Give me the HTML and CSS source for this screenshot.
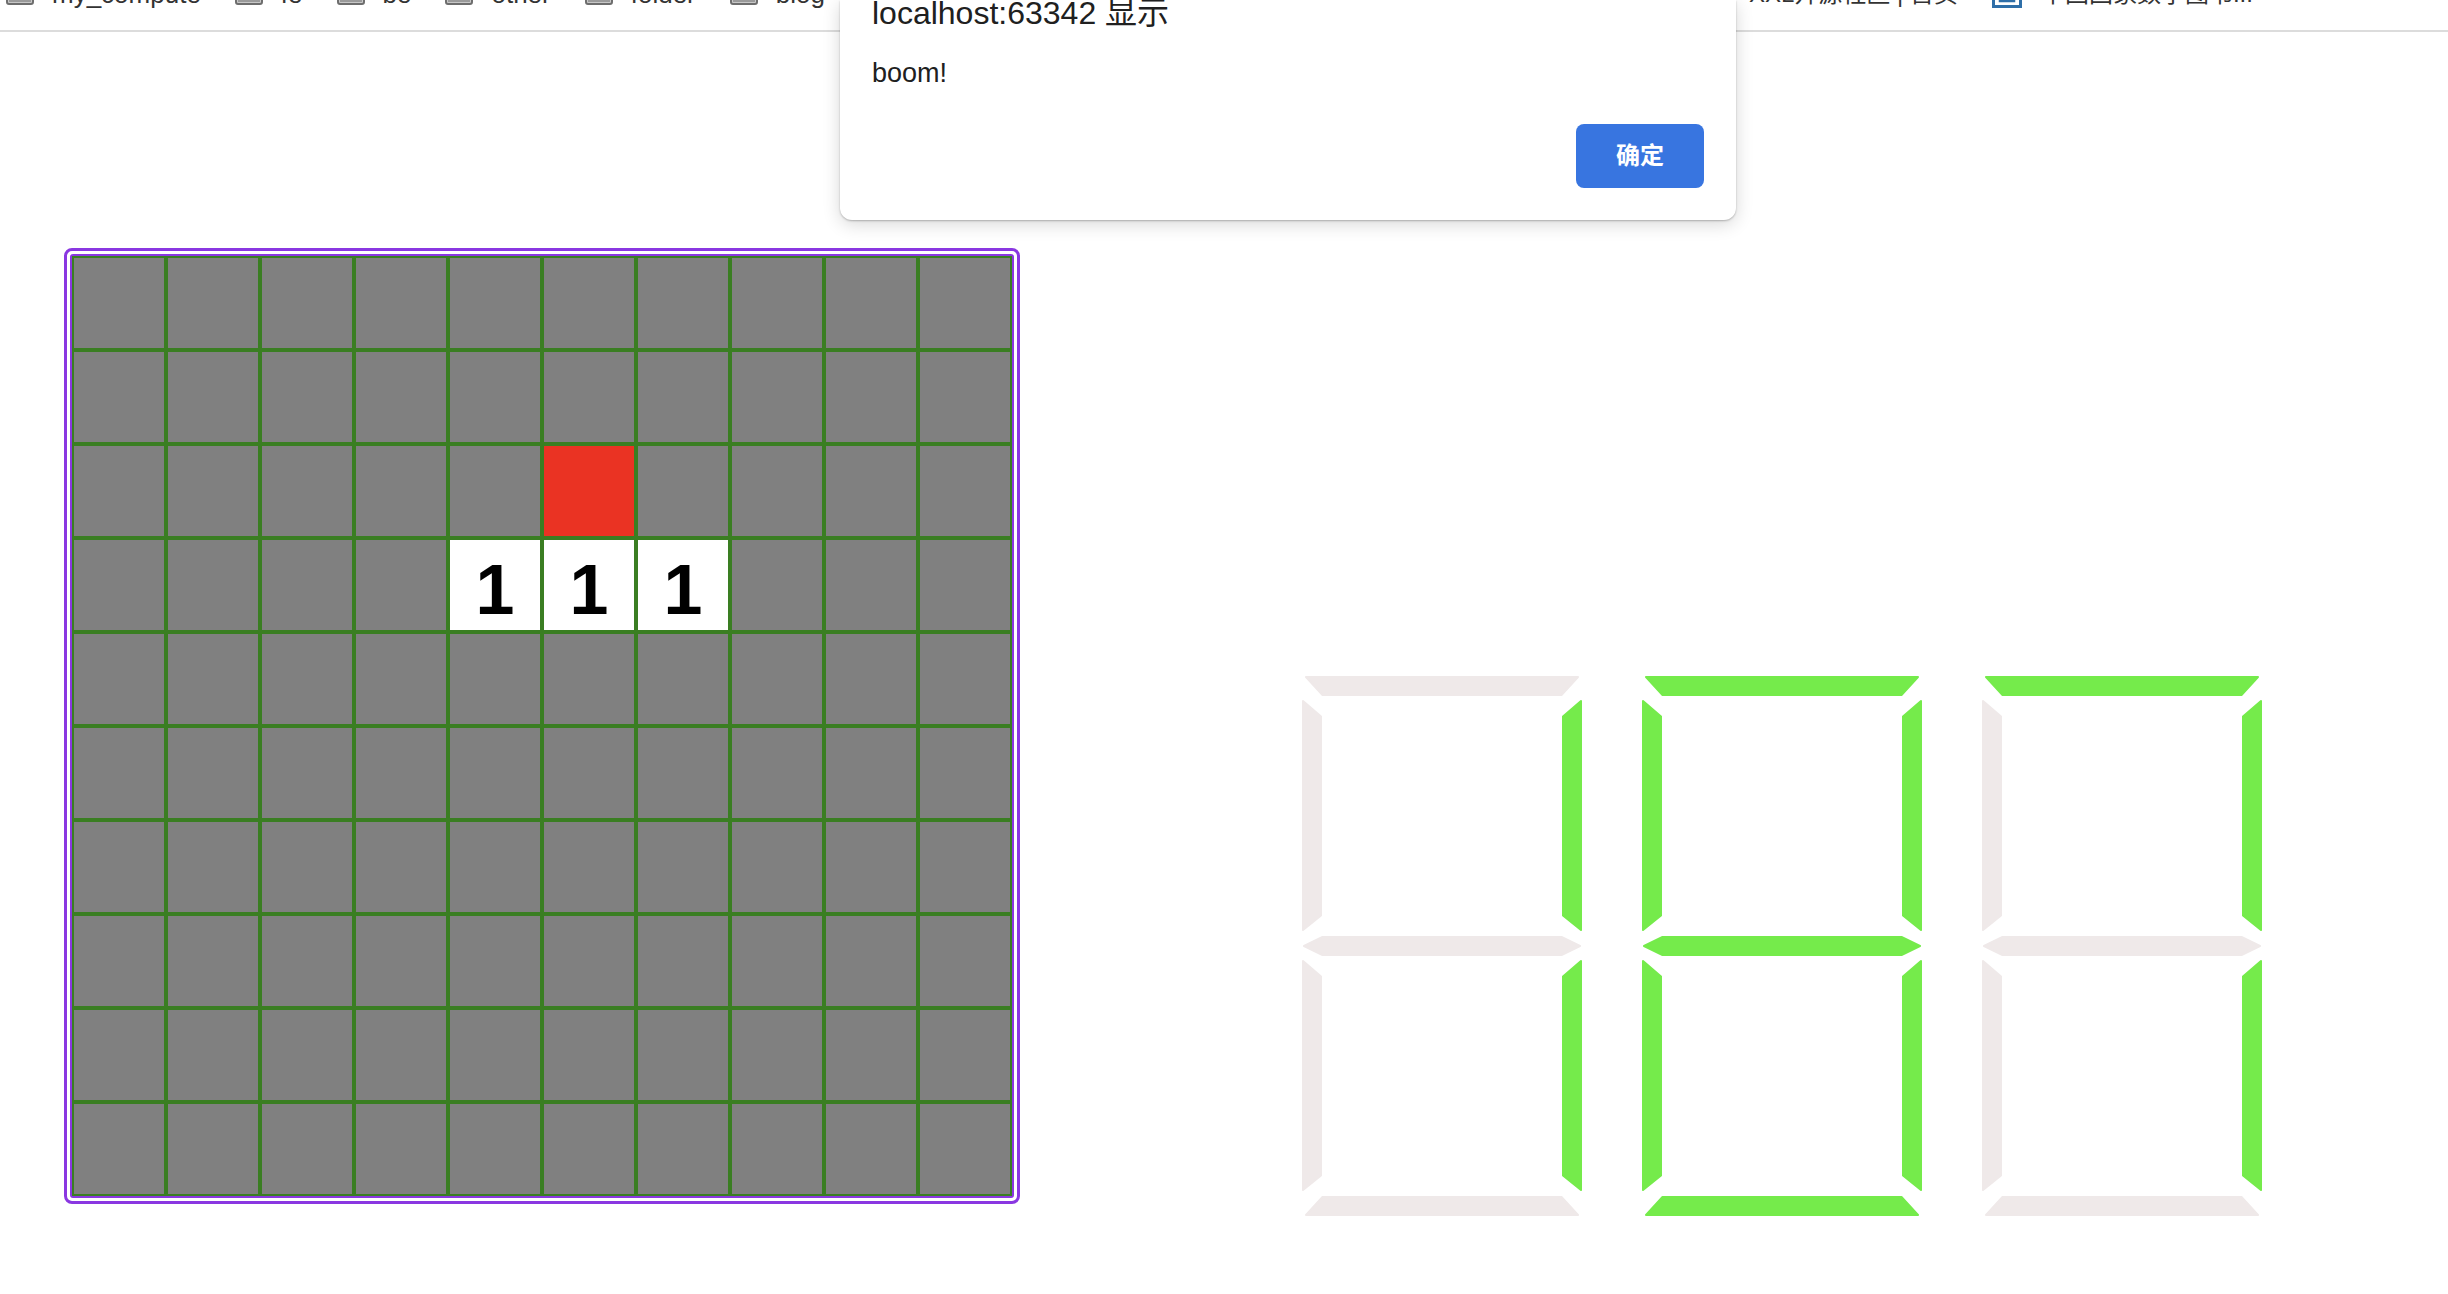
FILE: index.html
```html
<!DOCTYPE html>
<html lang="zh-CN">
<head>
<meta charset="utf-8">
<title>扫雷</title>
<link rel="stylesheet" href="styles.css">
</head>
<body>
<div class="bookmarks">
  <div class="bm-left">
    <span class="bm"><svg class="folder" viewBox="0 0 28 24"><rect x="1" y="1" width="26" height="21" rx="2" fill="#c8c8c8" stroke="#6e6e6e" stroke-width="2"/><line x1="3" y1="19" x2="25" y2="19" stroke="#9a9a9a" stroke-width="2"/></svg><span class="bm-text">my_compute</span></span>
    <span class="bm"><svg class="folder" viewBox="0 0 28 24"><rect x="1" y="1" width="26" height="21" rx="2" fill="#c8c8c8" stroke="#6e6e6e" stroke-width="2"/><line x1="3" y1="19" x2="25" y2="19" stroke="#9a9a9a" stroke-width="2"/></svg><span class="bm-text">fe</span></span>
    <span class="bm"><svg class="folder" viewBox="0 0 28 24"><rect x="1" y="1" width="26" height="21" rx="2" fill="#c8c8c8" stroke="#6e6e6e" stroke-width="2"/><line x1="3" y1="19" x2="25" y2="19" stroke="#9a9a9a" stroke-width="2"/></svg><span class="bm-text">be</span></span>
    <span class="bm"><svg class="folder" viewBox="0 0 28 24"><rect x="1" y="1" width="26" height="21" rx="2" fill="#c8c8c8" stroke="#6e6e6e" stroke-width="2"/><line x1="3" y1="19" x2="25" y2="19" stroke="#9a9a9a" stroke-width="2"/></svg><span class="bm-text">other</span></span>
    <span class="bm"><svg class="folder" viewBox="0 0 28 24"><rect x="1" y="1" width="26" height="21" rx="2" fill="#c8c8c8" stroke="#6e6e6e" stroke-width="2"/><line x1="3" y1="19" x2="25" y2="19" stroke="#9a9a9a" stroke-width="2"/></svg><span class="bm-text">folder</span></span>
    <span class="bm"><svg class="folder" viewBox="0 0 28 24"><rect x="1" y="1" width="26" height="21" rx="2" fill="#c8c8c8" stroke="#6e6e6e" stroke-width="2"/><line x1="3" y1="19" x2="25" y2="19" stroke="#9a9a9a" stroke-width="2"/></svg><span class="bm-text">blog</span></span>
  </div>
  <div class="bm-right">
    <span class="bm"><span class="bm-text">XXL开源社区 | 首页</span></span>
    <span class="bm"><svg class="site" viewBox="0 0 30 26"><rect x="1.5" y="1.5" width="27" height="23" fill="#ffffff" stroke="#2f6fa8" stroke-width="3"/><rect x="8" y="6" width="14" height="13" fill="#d9e7f3" stroke="#2f6fa8" stroke-width="2.5"/></svg><span class="bm-text">中国国家数字图书...</span></span>
  </div>
</div>

<div class="main">
  <div class="board">
    <div class="grid">
      <div class="cell"></div><div class="cell"></div><div class="cell"></div><div class="cell"></div><div class="cell"></div><div class="cell"></div><div class="cell"></div><div class="cell"></div><div class="cell"></div><div class="cell"></div>
      <div class="cell"></div><div class="cell"></div><div class="cell"></div><div class="cell"></div><div class="cell"></div><div class="cell"></div><div class="cell"></div><div class="cell"></div><div class="cell"></div><div class="cell"></div>
      <div class="cell"></div><div class="cell"></div><div class="cell"></div><div class="cell"></div><div class="cell"></div><div class="cell mine"></div><div class="cell"></div><div class="cell"></div><div class="cell"></div><div class="cell"></div>
      <div class="cell"></div><div class="cell"></div><div class="cell"></div><div class="cell"></div><div class="cell open">1</div><div class="cell open">1</div><div class="cell open">1</div><div class="cell"></div><div class="cell"></div><div class="cell"></div>
      <div class="cell"></div><div class="cell"></div><div class="cell"></div><div class="cell"></div><div class="cell"></div><div class="cell"></div><div class="cell"></div><div class="cell"></div><div class="cell"></div><div class="cell"></div>
      <div class="cell"></div><div class="cell"></div><div class="cell"></div><div class="cell"></div><div class="cell"></div><div class="cell"></div><div class="cell"></div><div class="cell"></div><div class="cell"></div><div class="cell"></div>
      <div class="cell"></div><div class="cell"></div><div class="cell"></div><div class="cell"></div><div class="cell"></div><div class="cell"></div><div class="cell"></div><div class="cell"></div><div class="cell"></div><div class="cell"></div>
      <div class="cell"></div><div class="cell"></div><div class="cell"></div><div class="cell"></div><div class="cell"></div><div class="cell"></div><div class="cell"></div><div class="cell"></div><div class="cell"></div><div class="cell"></div>
      <div class="cell"></div><div class="cell"></div><div class="cell"></div><div class="cell"></div><div class="cell"></div><div class="cell"></div><div class="cell"></div><div class="cell"></div><div class="cell"></div><div class="cell"></div>
      <div class="cell"></div><div class="cell"></div><div class="cell"></div><div class="cell"></div><div class="cell"></div><div class="cell"></div><div class="cell"></div><div class="cell"></div><div class="cell"></div><div class="cell"></div>
    </div>
  </div>

  <div class="digits">
    <svg class="digit" viewBox="0 0 280 540">
      <polygon class="seg" points="4,1 276,1 259.5,19 20.5,19"/>
      <polygon class="seg" points="1,25 19,40.5 19,239.5 1,254"/>
      <polygon class="seg on" points="279,25 261,40.5 261,239.5 279,254"/>
      <polygon class="seg" points="2,270 20.5,261 259.5,261 278,270 259.5,279 20.5,279"/>
      <polygon class="seg" points="1,285 19,300.5 19,499.5 1,514"/>
      <polygon class="seg on" points="279,285 261,300.5 261,499.5 279,514"/>
      <polygon class="seg" points="20.5,521 259.5,521 276,539 4,539"/>
    </svg>
    <svg class="digit" viewBox="0 0 280 540">
      <polygon class="seg on" points="4,1 276,1 259.5,19 20.5,19"/>
      <polygon class="seg on" points="1,25 19,40.5 19,239.5 1,254"/>
      <polygon class="seg on" points="279,25 261,40.5 261,239.5 279,254"/>
      <polygon class="seg on" points="2,270 20.5,261 259.5,261 278,270 259.5,279 20.5,279"/>
      <polygon class="seg on" points="1,285 19,300.5 19,499.5 1,514"/>
      <polygon class="seg on" points="279,285 261,300.5 261,499.5 279,514"/>
      <polygon class="seg on" points="20.5,521 259.5,521 276,539 4,539"/>
    </svg>
    <svg class="digit" viewBox="0 0 280 540">
      <polygon class="seg on" points="4,1 276,1 259.5,19 20.5,19"/>
      <polygon class="seg" points="1,25 19,40.5 19,239.5 1,254"/>
      <polygon class="seg on" points="279,25 261,40.5 261,239.5 279,254"/>
      <polygon class="seg" points="2,270 20.5,261 259.5,261 278,270 259.5,279 20.5,279"/>
      <polygon class="seg" points="1,285 19,300.5 19,499.5 1,514"/>
      <polygon class="seg on" points="279,285 261,300.5 261,499.5 279,514"/>
      <polygon class="seg" points="20.5,521 259.5,521 276,539 4,539"/>
    </svg>
  </div>
</div>

<div class="dialog">
  <div class="dlg-title">localhost:63342 显示</div>
  <div class="dlg-msg">boom!</div>
  <button class="dlg-btn">确定</button>
</div>
</body>
</html>
```

FILE: styles.css
```css
html, body {
  margin: 0;
  padding: 0;
  background: #ffffff;
}

body {
  font-family: "Liberation Sans", "Noto Sans CJK SC", sans-serif;
  color: #222222;
  width: 2448px;
  height: 1294px;
  overflow: hidden;
  position: relative;
}

/* bookmarks bar (cut at top) */
.bookmarks {
  height: 30px;
  border-bottom: 2px solid #dcdcdc;
  overflow: hidden;
  display: grid;
  grid-template-columns: 1749px auto;
}

.bm-left,
.bm-right {
  display: flex;
  gap: 34px;
  margin-top: -21px;
  white-space: nowrap;
}

.bm-left {
  padding-left: 6px;
}

.bm-right {
  gap: 34px;
}

.bm {
  display: inline-block;
  font-size: 26px;
  line-height: 30px;
  color: #333333;
}

.bm-right .bm {
  font-size: 24px;
}

.folder {
  width: 28px;
  height: 24px;
  vertical-align: -3px;
  margin-right: 18px;
}

.site {
  width: 30px;
  height: 26px;
  vertical-align: -6px;
  margin-right: 19px;
}

/* main layout */
.main {
  display: flex;
  align-items: flex-start;
  padding: 216px 0 0 64px;
}

.board {
  border: 3px solid #8a37e1;
  border-radius: 8px;
  padding: 3px;
  background: #ffffff;
}

.grid {
  display: grid;
  grid-template-columns: repeat(10, 94px);
  border: 2px solid #8a37e1;
  border-radius: 3px;
}

.cell {
  width: 90px;
  height: 90px;
  border: 2px solid #3a7e22;
  background: #808080;
}

.cell.mine {
  background: #ea3323;
}

.cell.open {
  background: #ffffff;
  color: #000000;
  font-family: "Liberation Sans", sans-serif;
  font-weight: bold;
  font-size: 70px;
  line-height: 90px;
  text-align: center;
  height: 85px;
  padding-top: 5px;
  overflow: visible;
}

/* seven segment digits */
.digits {
  display: flex;
  gap: 60px;
  margin-left: 282px;
  margin-top: 428px;
}

.digit {
  width: 280px;
  height: 540px;
  display: block;
}

.seg {
  fill: #efe9e9;
  stroke: #efe9e9;
  stroke-width: 2;
  stroke-linejoin: round;
}

.seg.on {
  fill: #75eb4b;
  stroke: #75eb4b;
}

/* alert dialog */
.dialog {
  position: absolute;
  left: 840px;
  top: 0;
  width: 896px;
  height: 220px;
  box-sizing: border-box;
  padding: 0 32px 32px 32px;
  background: #ffffff;
  border-radius: 0 0 12px 12px;
  box-shadow: 0 1px 2px rgba(0, 0, 0, 0.25), 0 4px 18px rgba(0, 0, 0, 0.16);
  display: flex;
  flex-direction: column;
  font-family: "Liberation Sans", "Noto Sans CJK SC", sans-serif;
}

.dlg-title {
  font-size: 32px;
  line-height: 36px;
  margin-top: -5px;
  color: #202020;
  white-space: nowrap;
}

.dlg-msg {
  font-size: 27px;
  line-height: 30px;
  margin-top: 27px;
  color: #202020;
}

.dlg-btn {
  align-self: flex-end;
  margin-top: 36px;
  width: 128px;
  height: 64px;
  border: none;
  border-radius: 8px;
  background: #3875e0;
  color: #ffffff;
  font-family: "Noto Sans CJK SC", sans-serif;
  font-weight: 700;
  font-size: 24px;
  line-height: 30px;
  padding: 0 0 4px 0;
}
```
